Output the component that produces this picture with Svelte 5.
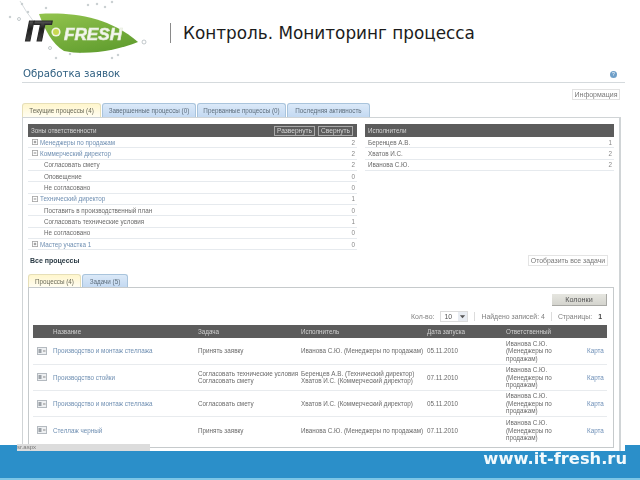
<script>
  const zones = [
    { name: "Менеджеры по продажам", count: 2, kind: "plus" },
    { name: "Коммерческий директор", count: 2, kind: "minus" },
    { name: "Согласовать смету", count: 2 },
    { name: "Оповещение", count: 0 },
    { name: "Не согласовано", count: 0 },
    { name: "Технический директор", count: 1, kind: "minus" },
    { name: "Поставить в производственный план", count: 0 },
    { name: "Согласовать технические условия", count: 1 },
    { name: "Не согласовано", count: 0 },
    { name: "Мастер участка 1", count: 0, kind: "plus" },
  ];

  const people = [
    { name: "Беренцев А.В.", count: 1 },
    { name: "Хватов И.С.", count: 2 },
    { name: "Иванова С.Ю.", count: 2 },
  ];

  const owner = ["Иванова С.Ю.", "(Менеджеры по", "продажам)"];

  const processes = [
    {
      name: "Производство и монтаж стеллажа",
      tasks: ["Принять заявку"],
      who: ["Иванова С.Ю. (Менеджеры по продажам)"],
      date: "05.11.2010",
    },
    {
      name: "Производство стойки",
      tasks: ["Согласовать технические условия", "Согласовать смету"],
      who: ["Беренцев А.В. (Технический директор)", "Хватов И.С. (Коммерческий директор)"],
      date: "07.11.2010",
    },
    {
      name: "Производство и монтаж стеллажа",
      tasks: ["Согласовать смету"],
      who: ["Хватов И.С. (Коммерческий директор)"],
      date: "05.11.2010",
    },
    {
      name: "Стеллаж черный",
      tasks: ["Принять заявку"],
      who: ["Иванова С.Ю. (Менеджеры по продажам)"],
      date: "07.11.2010",
    },
  ];

  const splashes = [
    [22, 4, 0.8], [28, 12, 0.8], [10, 17, 0.8], [19, 19, 1.5], [46, 8, 0.8], [88, 5, 0.8], [97, 4, 0.8], [105, 7, 0.8],
    [112, 2, 0.8], [144, 42, 2], [50, 48, 1.5], [56, 58, 0.8], [70, 54, 0.8], [80, 52, 0.8], [118, 55, 0.8], [112, 58, 0.8],
  ];
</script>

<div class="page">
  <header class="top">
    <svg class="logo" viewBox="0 0 150 62" width="150" height="62">
      <defs>
        <linearGradient id="leaf" x1="0" y1="0" x2="0.6" y2="1">
          <stop offset="0" stop-color="#93c44e" />
          <stop offset="1" stop-color="#639f30" />
        </linearGradient>
        <linearGradient id="it" x1="0" y1="0" x2="0" y2="1">
          <stop offset="0" stop-color="#8a8a8a" />
          <stop offset="0.45" stop-color="#1c1c1c" />
          <stop offset="1" stop-color="#555" />
        </linearGradient>
      </defs>
      {#each splashes as [cx, cy, r]}
        <circle {cx} {cy} {r} fill="none" stroke="#a8b2b4" stroke-width="0.7" />
      {/each}
      <path d="M20 1 Q26 12 34 22" fill="none" stroke="#c4ccce" stroke-width="0.7" />
      <path
        d="M39 14 C70 12 108 16 138 42 C118 50 88 56 64 51 C52 44 44 28 39 14 Z"
        fill="url(#leaf)"
      />
      <text x="25" y="41" class="logo-it" fill="url(#it)">IT</text>
      <circle cx="56" cy="32" r="4.6" fill="#f2f5e2" />
      <circle cx="56" cy="32" r="3" fill="#c8d850" />
      <text x="64" y="40" class="logo-fresh" textLength="58" lengthAdjust="spacingAndGlyphs">FRESH</text>
    </svg>
    <h1 class="title">Контроль. Мониторинг процесса</h1>
  </header>

  <main class="shot">
    <div class="heading">
      <h2>Обработка заявок</h2>
      <span class="help">?</span>
    </div>
    <div class="info-line"><span class="btn">Информация</span></div>

    <nav class="tabs">
      <span class="tab on t1">Текущие процессы (4)</span>
      <span class="tab t2">Завершенные процессы (0)</span>
      <span class="tab t3">Прерванные процессы (0)</span>
      <span class="tab t4">Последняя активность</span>
    </nav>

    <section class="outer">
      <div class="summary">
        <div>
          <div class="bar">
            <span>Зоны ответственности</span>
            <span class="bar-btns">
              <span class="btn dark">Развернуть</span>
              <span class="btn dark">Свернуть</span>
            </span>
          </div>
          {#each zones as z}
            <div class="row">
              {#if z.kind}
                <span class="group">
                  <svg class="tree" viewBox="0 0 7 7" width="6" height="6">
                    <rect x="0.5" y="0.5" width="6" height="6" fill="#fff" stroke="#a8a8a8" />
                    <path d="M2 3.5H5" stroke="#777" />
                    {#if z.kind === "plus"}<path d="M3.5 2V5" stroke="#777" />{/if}
                  </svg>
                  <span class="link">{z.name}</span>
                </span>
              {:else}
                <span class="leaf">{z.name}</span>
              {/if}
              <span class="num">{z.count}</span>
            </div>
          {/each}
        </div>

        <div>
          <div class="bar"><span>Исполнители</span></div>
          {#each people as p}
            <div class="row person">
              <span>{p.name}</span>
              <span class="num">{p.count}</span>
            </div>
          {/each}
        </div>
      </div>

      <div class="all-head">
        <b>Все процессы</b>
        <span class="btn wide">Отобразить все задачи</span>
      </div>

      <nav class="tabs inner-tabs">
        <span class="tab on i1">Процессы (4)</span>
        <span class="tab i2">Задачи (5)</span>
      </nav>

      <section class="inner">
        <div class="cols-line"><span class="cols-btn">Колонки</span></div>
        <div class="pager">
          <span>Кол-во:</span>
          <span class="select">10<i>
            <svg viewBox="0 0 8 8" width="7" height="7"><path d="M1 2.5L4 6L7 2.5Z" fill="#555" /></svg>
          </i></span>
          <span class="sep"></span>
          <span>Найдено записей: 4</span>
          <span class="sep"></span>
          <span>Страницы:</span>
          <b>1</b>
        </div>

        <div class="grid-row grid-head">
          <span></span>
          <span>Название</span>
          <span>Задача</span>
          <span>Исполнитель</span>
          <span>Дата запуска</span>
          <span>Ответственный</span>
          <span></span>
        </div>
        {#each processes as p}
          <div class="grid-row item">
            <svg class="proc" viewBox="0 0 10 8" width="10" height="8">
              <rect x="0.5" y="0.5" width="9" height="7" fill="#eef0f2" stroke="#b4bac0" />
              <rect x="1.5" y="2" width="3" height="4" fill="#9ca2a8" />
              <path d="M6 4H8.5" stroke="#888" />
            </svg>
            <span class="link">{p.name}</span>
            <span>{#each p.tasks as t}<div>{t}</div>{/each}</span>
            <span>{#each p.who as w}<div>{w}</div>{/each}</span>
            <span>{p.date}</span>
            <span>{#each owner as o}<div>{o}</div>{/each}</span>
            <span class="link map">Карта</span>
          </div>
        {/each}
      </section>
    </section>
  </main>

  <footer class="band">
    <span class="status">sr.aspx</span>
    <span class="url">www.it-fresh.ru</span>
  </footer>
</div>

<style>
  :global(body) {
    margin: 0;
    background: #fff;
  }

  .page {
    width: 640px;
    height: 480px;
    overflow: hidden;
    background: #fff;
    font-family: "Liberation Sans", Arial, sans-serif;
  }

  .top {
    display: flex;
    height: 62px;
  }

  .logo {
    display: block;
    filter: blur(0.4px);
  }

  .logo-it {
    font: italic 700 30px "Liberation Sans", sans-serif;
    letter-spacing: -1.5px;
    stroke: #2a2a2a;
    stroke-width: 1.2px;
  }

  .logo-fresh {
    font: italic 700 16.5px "Liberation Sans", sans-serif;
    fill: #f4f7ee;
    stroke: #e4ebdc;
    stroke-width: 0.7px;
  }

  .title {
    margin: 23px 0 0 20px;
    height: 20px;
    padding-left: 12px;
    border-left: 1px solid #8a8a8a;
    font: 400 16.85px/20px "DejaVu Sans", sans-serif;
    color: #1c1c1c;
    white-space: nowrap;
  }

  .shot {
    position: relative;
    z-index: 1;
    margin-left: 22px;
    width: 603px;
    height: 389px;
    background: #fff;
    font-size: 6.3px;
    color: #6a6a6a;
    filter: blur(0.55px);
  }

  .heading {
    display: flex;
    justify-content: space-between;
    align-items: center;
    height: 21px;
    box-sizing: border-box;
    padding-right: 8px;
    border-bottom: 1px solid #d5dadd;
  }

  .heading h2 {
    margin: 3px 0 0 1px;
    font: 400 10.2px "DejaVu Sans", sans-serif;
    color: #2f5f80;
  }

  .help {
    width: 7px;
    height: 7px;
    margin-top: 4px;
    border-radius: 50%;
    background: #6f9fc8;
    color: #fff;
    font-size: 5px;
    line-height: 7px;
    text-align: center;
  }

  .info-line {
    display: flex;
    justify-content: flex-end;
    height: 20px;
    padding: 6px 5px 0 0;
    box-sizing: border-box;
  }

  .btn {
    display: inline-flex;
    align-items: center;
    justify-content: center;
    box-sizing: border-box;
    width: 48px;
    height: 11px;
    border: 1px solid #e2e2e2;
    background: #fff;
    font-size: 7px;
    color: #777;
  }

  .tabs {
    display: flex;
    height: 14px;
    gap: 1px;
  }

  .tab {
    display: flex;
    align-items: center;
    justify-content: center;
    box-sizing: border-box;
    border: 1px solid #a9c4dc;
    border-bottom: 0;
    border-radius: 3px 3px 0 0;
    background: linear-gradient(#dbe9f8, #c3d9f2);
    color: #5d6d7c;
    white-space: nowrap;
  }

  .tab.on {
    border-color: #e6dfb8;
    background: linear-gradient(#fff6cc, #fffdf2);
    color: #6a6a5a;
  }

  .t1 { width: 79px; }
  .t2 { width: 94px; }
  .t3 { width: 89px; }
  .t4 { width: 83px; }

  .outer {
    box-sizing: border-box;
    width: 599px;
    height: 334px;
    padding: 6px 5px 0 5px;
    border: solid #d0d4d6;
    border-width: 1px 2px 0 1px;
  }

  .summary {
    display: grid;
    grid-template-columns: 329px 249px;
    gap: 8px;
  }

  .bar {
    display: flex;
    justify-content: space-between;
    align-items: center;
    height: 13px;
    padding: 0 4px 0 3px;
    background: #5c5c5c;
    color: #d4d4d4;
  }

  .bar-btns {
    display: flex;
    gap: 3px;
  }

  .btn.dark {
    width: 41px;
    height: 10px;
    border-color: #aaa;
    background: #5c5c5c;
    color: #d4d4d4;
    font-size: 6.6px;
  }

  .btn.dark + .btn.dark {
    width: 35px;
  }

  .row {
    display: flex;
    justify-content: space-between;
    align-items: center;
    box-sizing: border-box;
    height: 11.33px;
    padding: 0 2px 0 4px;
    border-bottom: 1px solid #e6eaee;
  }

  .group {
    display: flex;
    align-items: center;
    gap: 2px;
  }

  .tree {
    flex: none;
  }

  .leaf {
    padding-left: 12px;
  }

  .person {
    padding-left: 3px;
  }

  .num {
    color: #888;
  }

  .link {
    color: #6f8fb2;
  }

  .all-head {
    display: flex;
    justify-content: space-between;
    align-items: center;
    height: 12px;
    margin-top: 4px;
    padding: 0 6px 0 2px;
    color: #2a3a44;
    font-size: 7px;
  }

  .btn.wide {
    width: 80px;
    border-color: #e4e4e4;
    font-size: 6.9px;
    font-weight: 400;
  }

  .inner-tabs {
    height: 13px;
    margin-top: 8px;
  }

  .i1 { width: 53px; }
  .i2 { width: 46px; }

  .inner {
    box-sizing: border-box;
    width: 586px;
    height: 161px;
    padding: 6px 6px 0 4px;
    border: 1px solid #c6cacc;
  }

  .cols-line {
    display: flex;
    justify-content: flex-end;
    height: 12px;
  }

  .cols-btn {
    display: flex;
    align-items: center;
    justify-content: center;
    width: 55px;
    height: 12px;
    box-sizing: border-box;
    background: linear-gradient(#e6e6e0, #d4d4ce);
    border: solid #a8a8a4;
    border-width: 0 1px 1px 0;
    color: #555;
    font-size: 7.2px;
  }

  .pager {
    display: flex;
    justify-content: flex-end;
    align-items: center;
    gap: 6px;
    height: 18px;
    margin-top: 1px;
    padding-right: 5px;
    font-size: 6.9px;
    color: #808080;
  }

  .pager b {
    color: #444;
  }

  .select {
    display: flex;
    justify-content: space-between;
    align-items: center;
    box-sizing: border-box;
    width: 28px;
    height: 11px;
    padding-left: 3px;
    border: 1px solid #dcdcdc;
    color: #555;
  }

  .select i {
    display: flex;
    align-items: center;
    justify-content: center;
    width: 9px;
    height: 9px;
    background: #e8ecf2;
  }

  .sep {
    width: 1px;
    height: 9px;
    background: #dcdcdc;
  }

  .grid-row {
    display: grid;
    grid-template-columns: 20px 145px 103px 126px 79px 81px 20px;
    align-items: center;
    box-sizing: border-box;
    line-height: 7.4px;
  }

  .grid-head {
    height: 13px;
    background: #5c5c5c;
    color: #d0d0d0;
  }

  .item {
    height: 26.3px;
    border-bottom: 1px solid #e8ebee;
  }

  .item:last-child {
    border-bottom: 0;
  }

  .proc {
    margin-left: 4px;
  }

  .map {
    color: #6f90b8;
  }

  .band {
    position: relative;
    display: flex;
    justify-content: flex-end;
    align-items: flex-start;
    box-sizing: border-box;
    height: 35px;
    margin-top: -6px;
    padding: 4px 13px 0 0;
    background: #2b8fc9;
    border-bottom: 2px solid #7cc6e6;
  }

  .status {
    position: absolute;
    z-index: 2;
    left: 17px;
    top: -1px;
    width: 133px;
    height: 7px;
    background: #dcdcdc;
    font-size: 6px;
    line-height: 7px;
    color: #777;
    filter: blur(0.4px);
  }

  .url {
    position: relative;
    z-index: 2;
    font: 700 16.3px "DejaVu Sans", sans-serif;
    color: #f2fafd;
    filter: blur(0.3px);
  }
</style>
